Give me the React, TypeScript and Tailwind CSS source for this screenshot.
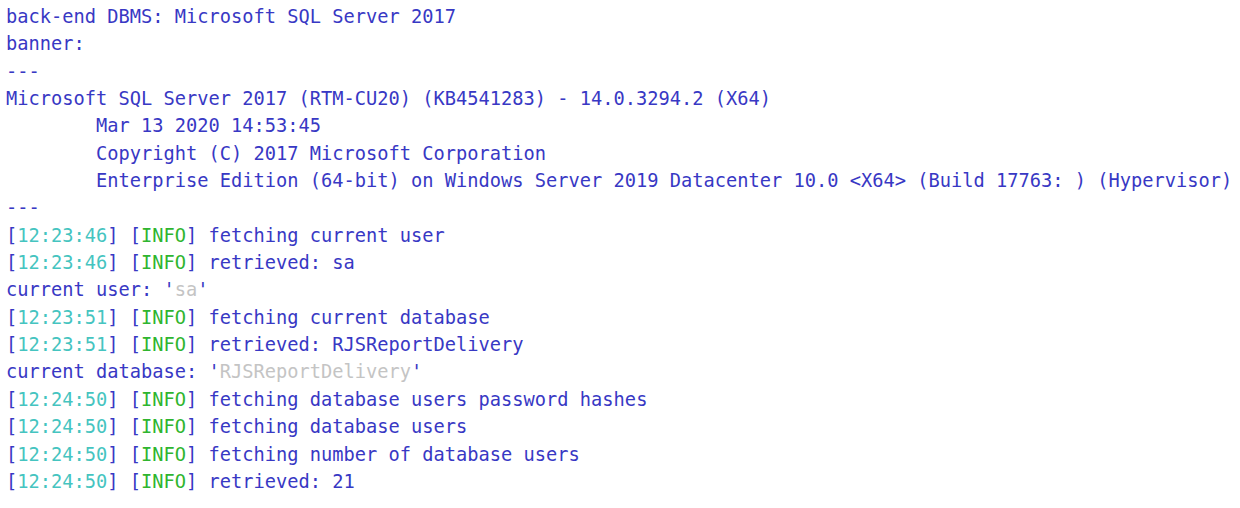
const Stamp = ({ t }: { t: string }) => (
  <>
    [<span className="text-[#45c4c0]">{t}</span>] [<span className="text-[#2fb52f]">INFO</span>]{" "}
  </>
);

const LOG: { t: string; msg: string }[] = [
  { t: "12:24:50", msg: "fetching database users password hashes" },
  { t: "12:24:50", msg: "fetching database users" },
  { t: "12:24:50", msg: "fetching number of database users" },
  { t: "12:24:50", msg: "retrieved: 21" },
];

export default function App() {
  return (
    <div className="w-[1240px] h-[508px] bg-white overflow-hidden">
      <pre className="px-[6px] pt-[3px] text-[18.7px] leading-[27.35px] text-[#3838c4] font-['DejaVu_Sans_Mono','Liberation_Mono',monospace] whitespace-pre">
        <div>back-end DBMS: Microsoft SQL Server 2017</div>
        <div>banner:</div>
        <div>---</div>
        <div>Microsoft SQL Server 2017 (RTM-CU20) (KB4541283) - 14.0.3294.2 (X64)</div>
        <div>{"        "}Mar 13 2020 14:53:45</div>
        <div>{"        "}Copyright (C) 2017 Microsoft Corporation</div>
        <div>{"        "}Enterprise Edition (64-bit) on Windows Server 2019 Datacenter 10.0 &lt;X64&gt; (Build 17763: ) (Hypervisor)</div>
        <div>---</div>
        <div><Stamp t="12:23:46" />fetching current user</div>
        <div><Stamp t="12:23:46" />retrieved: sa</div>
        <div>current user: '<span className="text-[#c4c4c4]">sa</span>'</div>
        <div><Stamp t="12:23:51" />fetching current database</div>
        <div><Stamp t="12:23:51" />retrieved: RJSReportDelivery</div>
        <div>current database: '<span className="text-[#c4c4c4]">RJSReportDelivery</span>'</div>
        {LOG.map((l, i) => (
          <div key={i}><Stamp t={l.t} />{l.msg}</div>
        ))}
      </pre>
    </div>
  );
}
